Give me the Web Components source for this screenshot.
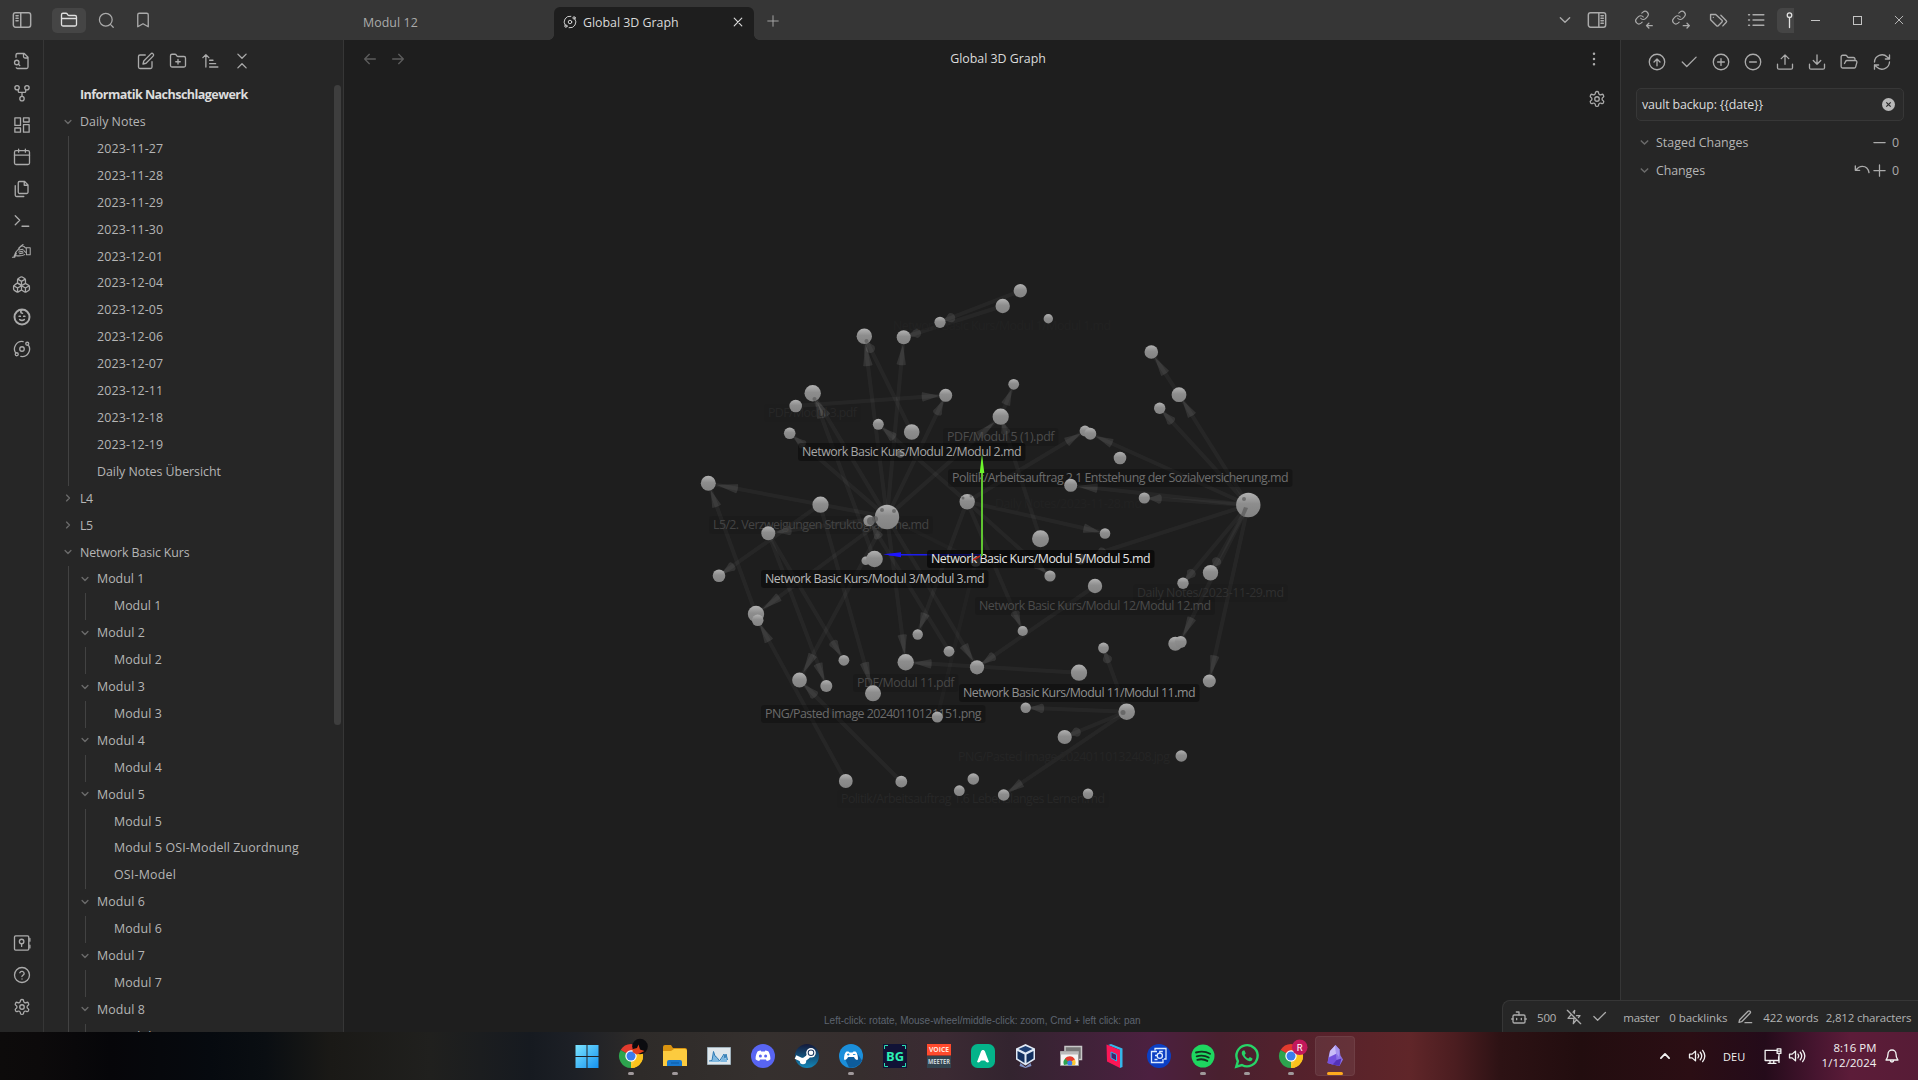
<!DOCTYPE html>
<html lang="de">
<head>
<meta charset="utf-8">
<title>Global 3D Graph</title>
<style>
html,body{margin:0;padding:0;background:#1e1e1e;overflow:hidden}
body{font-family:"Open Sans","Noto Sans",sans-serif;font-size:12.4px;color:#b5b5b5}
</style>
</head>
<body>
<vault-app></vault-app>
<script>
const ICONS = {
  panelL:'<rect x="1.6" y="3.4" width="20.8" height="17.2" rx="2.6"/><path d="M10.5 3.4v17.2M4.8 7h2.6M4.8 10h2.6M4.8 13h2.6"/>',
  panelR:'<rect x="1.6" y="3.4" width="20.8" height="17.2" rx="2.6"/><path d="M14.2 3.4v17.2M16.8 7h2.8M16.8 10h2.8M16.8 13h2.8M16.8 16h2.8"/>',
  folder:'<path d="M20 20a2 2 0 0 0 2-2V8a2 2 0 0 0-2-2h-7.9a2 2 0 0 1-1.7-.9L9.6 3.9A2 2 0 0 0 7.9 3H4a2 2 0 0 0-2 2v13a2 2 0 0 0 2 2ZM2 10h20"/>',
  search:'<circle cx="11" cy="11" r="9"/><path d="m21.5 21.5-4-4"/>',
  bookmark:'<path d="m19 21-7-4-7 4V5a2 2 0 0 1 2-2h10a2 2 0 0 1 2 2v16z"/>',
  fileSearch:'<path d="M14 2v4a2 2 0 0 0 2 2h4M4.3 21a2 2 0 0 0 1.7 1h12a2 2 0 0 0 2-2V7l-5-5H6a2 2 0 0 0-2 2v3"/><circle cx="5" cy="14" r="3"/><path d="m9 18-1.8-1.8"/>',
  fork:'<circle cx="12" cy="19.5" r="2.9"/><circle cx="5.4" cy="5" r="2.9"/><circle cx="18.6" cy="5" r="2.9"/><path d="M17 8v1.5c0 1-.6 1.7-1.5 1.7h-7C7.600 11.200 7 10.500 7 9.500V8M12 11.500v5"/>',
  dash:'<rect x="2.500" y="2.500" width="7.500" height="10"/><rect x="14" y="2.500" width="7.500" height="5.500"/><rect x="14" y="11.500" width="7.500" height="10"/><rect x="2.500" y="16" width="7.500" height="5.500"/>',
  calendar:'<rect x="2" y="3.500" width="20" height="18.500" rx="2"/><path d="M16.500 1.500v4M7.500 1.500v4M2 9.500h20"/>',
  files:'<path d="M15.500 2H8.600A1.700 1.700 0 0 0 7 3.600v12.800A1.700 1.700 0 0 0 8.600 18h9.800a1.700 1.700 0 0 0 1.600-1.600V6.500L15.500 2zM15 2v5h5M3 7.600v12.800A1.700 1.700 0 0 0 4.600 22h9.800"/>',
  terminal:'<path d="m3 17 6-6-6-6M12 19h9"/>',
  hand:'<g stroke-width="1.300"><path d="M.5 20.500h3M2.500 20c1-4 3.500-8 6-10C10 7.500 12 5.500 14 4.500M5 18.500c3.500.5 8 .3 11-1.300M8.500 9c2-2.500 4-3 6-2.300 1.700.7 2.500 2.300 3.500 2.600M9 11.500l5-1.200M8.500 14l5-1M9.500 16l4.500-1M15 12c1 1.500 1.500 2.200 3 2.700M18 8.500l.3 9M18.300 8.500h4.700v9h-4.700M3.500 20.500l2-5"/></g>',
  boxes:'<g stroke-width="1.650"><path d="M3 12.900A2 2 0 0 0 2 14.600v3.200a2 2 0 0 0 1 1.700l3 1.800a2 2 0 0 0 2 0l4-2.400V13l-4-2.400a2 2 0 0 0-2 0ZM7 16.500l-4.700-2.900M7 16.500l5-3M7 16.500v5.100M12 13.500V19l4 2.400a2 2 0 0 0 2 0l3-1.800a2 2 0 0 0 1-1.700v-3.200a2 2 0 0 0-1-1.700l-3-1.800a2 2 0 0 0-2 0ZM17 16.500l-5-3M17 16.500l4.700-2.900M17 16.500v5.100M8 4.400A2 2 0 0 0 7 6.100v4.400l5 3 5-3V6.100a2 2 0 0 0-1-1.700l-3-1.800a2 2 0 0 0-2 0ZM12 8 7.300 5.200M12 8l4.700-2.800M12 8v5.500"/></g>',
  baby:'<circle cx="12" cy="12" r="10" stroke-width="2.600"/><path d="M12 2.500c-2.500 1-2 4.500.5 4.500M8.300 11h1.400M14.300 11h1.400M9 15.500c1.800 1.300 4.200 1.300 6 0" stroke-width="2.300"/>',
  orbit:'<circle cx="12" cy="12" r="3"/><circle cx="19" cy="5" r="2"/><circle cx="5" cy="19" r="2"/><path d="M10.400 21.900a10 10 0 0 0 9.900-15.500M13.500 2.100a10 10 0 0 0-9.800 15.500"/>',
  vault:'<rect x="2" y="2.500" width="19" height="19" rx="1.500"/><circle cx="11.500" cy="10" r="3"/><path d="M11.500 13v3.500M22.500 6v3.500M22.500 15v3.500"/>',
  help:'<circle cx="12" cy="12" r="10"/><path d="M9.100 9a3 3 0 0 1 5.800 1c0 2-3 2.500-3 4M12 17.300h.01"/>',
  gear:'<path d="M12.200 2h-.4a2 2 0 0 0-2 2v.2a2 2 0 0 1-1 1.700l-.4.300a2 2 0 0 1-2 0l-.200-.1a2 2 0 0 0-2.700.7l-.200.4a2 2 0 0 0 .7 2.700l.2.100a2 2 0 0 1 1 1.700v.500a2 2 0 0 1-1 1.700l-.2.100a2 2 0 0 0-.7 2.700l.2.400a2 2 0 0 0 2.700.7l.2-.1a2 2 0 0 1 2 0l.4.300a2 2 0 0 1 1 1.700v.2a2 2 0 0 0 2 2h.4a2 2 0 0 0 2-2v-.2a2 2 0 0 1 1-1.700l.4-.3a2 2 0 0 1 2 0l.2.100a2 2 0 0 0 2.700-.7l.2-.4a2 2 0 0 0-.7-2.700l-.2-.1a2 2 0 0 1-1-1.700v-.5a2 2 0 0 1 1-1.700l.2-.1a2 2 0 0 0 .7-2.700l-.2-.4a2 2 0 0 0-2.700-.7l-.2.100a2 2 0 0 1-2 0l-.4-.3a2 2 0 0 1-1-1.700V4a2 2 0 0 0-2-2z"/><circle cx="12" cy="12" r="3"/>',
  edit:'<path d="M11 4H4a2 2 0 0 0-2 2v14a2 2 0 0 0 2 2h14a2 2 0 0 0 2-2v-7"/><path d="M18.500 2.500a2.100 2.100 0 0 1 3 3L12 15l-4 1 1-4Z"/>',
  folderPlus:'<path d="M4 20h16a2 2 0 0 0 2-2V8a2 2 0 0 0-2-2h-7.900a2 2 0 0 1-1.700-.9L9.600 3.900A2 2 0 0 0 7.900 3H4a2 2 0 0 0-2 2v13a2 2 0 0 0 2 2ZM12 10v6M9 13h6"/>',
  sort:'<path d="M6.500 20V3.500M2.500 7.500l4-4 4 4M11.500 11h4.500M11.500 15.500h8M11.500 20h11"/>',
  collapse:'<path d="m6.500 2.800 5.500 5.500 5.500-5.500M6.500 21.200l5.500-5.500 5.500 5.500"/>',
  chevD:'<path d="m5 8.500 7 7 7-7"/>', chevR:'<path d="m8.500 5 7 7-7 7"/>', chevU:'<path d="m5 15.500 7-7 7 7"/>',
  x:'<path d="M18.500 5.500l-13 13M5.500 5.500l13 13"/>',
  plus:'<path d="M12 3v18M3 12h18"/>', minus:'<path d="M3 12h18"/>',
  arrowL:'<path d="m11 19-7-7 7-7M20 12H4"/>', arrowR:'<path d="M4 12h16M13 5l7 7-7 7"/>',
  dots:'<g fill="currentColor"><circle cx="12" cy="5" r=".8"/><circle cx="12" cy="12" r=".8"/><circle cx="12" cy="19" r=".8"/></g>',
  linkIn:'<g transform="translate(-1 -1.500) scale(.86)"><path d="M10 13a5 5 0 0 0 7.500.5l3-3a5 5 0 0 0-7-7.100l-1.800 1.700"/><path d="M14 11a5 5 0 0 0-7.500-.5l-3 3a5 5 0 0 0 7 7.100l1.800-1.700"/></g><path d="M23 19.500h-7.500M18.500 16.300 15.300 19.500l3.200 3.200"/>',
  linkOut:'<g transform="translate(-1 -1.500) scale(.86)"><path d="M10 13a5 5 0 0 0 7.500.5l3-3a5 5 0 0 0-7-7.100l-1.800 1.700"/><path d="M14 11a5 5 0 0 0-7.500-.5l-3 3a5 5 0 0 0 7 7.100l1.800-1.700"/></g><path d="M15 19.500h8M20 16.300l3.200 3.200-3.200 3.200"/>',
  tags:'<path d="M8.500 4.500H2v6.500l7.600 7.600a1.500 1.500 0 0 0 2.100 0l4.700-4.700a1.500 1.500 0 0 0 0-2.100zM5.500 8h.01M15 5.500l6.800 6.700a1.500 1.500 0 0 1 0 2.100L17.500 18.800"/>',
  list:'<path d="M8 5h14.500M8 12h14.500M8 19h14.500M2 5h1.500M2 12h1.500M2 19h1.500"/>',
  pull:'<circle cx="18" cy="18" r="3"/><circle cx="6" cy="5.500" r="3"/><path d="M13 6h3a2 2 0 0 1 2 2v7M6 8.500V22"/>',
  upCircle:'<circle cx="12" cy="12" r="10.300"/><path d="m8 12 4-4 4 4M12 17V8"/>',
  check:'<path d="M21.500 5.500 9 18l-6-6"/>',
  plusCircle:'<circle cx="12" cy="12" r="10.300"/><path d="M12 7.500v9M7.500 12h9"/>',
  minusCircle:'<circle cx="12" cy="12" r="10.300"/><path d="M7.500 12h9"/>',
  upload:'<path d="M22 15v4.500a2 2 0 0 1-2 2H4a2 2 0 0 1-2-2V15M17 7.500l-5-5-5 5M12 2.500V15"/>',
  download:'<path d="M22 15v4.500a2 2 0 0 1-2 2H4a2 2 0 0 1-2-2V15M7 10l5 5 5-5M12 15V2.500"/>',
  folderOpen:'<path d="m6 14 1.500-2.900A2 2 0 0 1 9.200 10H20.500a2 2 0 0 1 2 2.500l-1.600 6a2 2 0 0 1-1.900 1.500H3.500a2 2 0 0 1-2-2V5a2 2 0 0 1 2-2h3.900a2 2 0 0 1 1.700.9l.8 1.200a2 2 0 0 0 1.700.9H18a2 2 0 0 1 2 2v2"/>',
  refresh:'<path d="M2 12a10 10 0 0 1 17-6.700L22 8M22 2.500V8h-5.500M22 12a10 10 0 0 1-17 6.700L2 16M7.500 16H2v5.500"/>',
  undo:'<path d="M2 6v6.500h6.500M3 12c2.500-3.500 5.500-5.500 9.500-5.500 5 0 9 3.500 10 9.500"/>',
  bot:'<rect x="3" y="9" width="18" height="12" rx="2"/><path d="M8.500 14v2M15.500 14v2M12 9V4.500H8M1 15h2M21 15h2"/>',
  zapOff:'<path d="M12.400 6.800 13 2l-2.300 2.800M18.600 12.900 21 10h-5.300M8 8l-5 6h9l-1 8 5-6M2 2l20 20"/>',
  pencil:'<path d="M12 20.500h10M16.500 3.500a2.100 2.100 0 0 1 3 3L7 19l-4 1 1-4Z"/>',
  speaker:'<path d="M2 9.500v5h3.500L10 18.500v-13L5.500 9.500zM13.300 9.500c1.200 1.500 1.200 3.500 0 5M16.300 7c2.400 3 2.400 7 0 10M19.500 4.500c3.500 4.500 3.500 10.500 0 15"/>',
  net:'<path d="M16 4.500H1.500V18h18v-5M8 18v3.500M13 18v3.500M5.500 21.800H16M17.500 2.500h5v6h-5zM20 8.500V20.500M18.500 5.500h3"/>',
  bell:'<path d="M6 9a6 6 0 0 1 12 0c0 5 1.500 6.500 3 9H3c1.500-2.500 3-4 3-9M9.500 18.500a2.500 2.500 0 0 0 5 0"/>'
};
const def=(name,css,html,after)=>customElements.define(name,class extends HTMLElement{
  connectedCallback(){
    if(this.shadowRoot)return;
    const root=this.attachShadow({mode:'open'});
    root.innerHTML='<style>*{box-sizing:border-box}'+css+'</style>'+(typeof html==='function'?html(this):html);
    if(after)after(this,root);
  }
});
const ic=(n,s=18,extra='')=>`<ui-icon name="${n}" size="${s}" ${extra}></ui-icon>`;
const tx=(t,w,extra='')=>`<fit-text w="${w}" ${extra}>${t}</fit-text>`;

def('vault-app',`:host{display:flex;flex-direction:column;width:1918px;height:1080px;position:relative}
 .mid{display:flex;height:992px;position:relative}
 status-bar{position:absolute;right:0;bottom:0}`,
 `<title-bar></title-bar><div class="mid"><ribbon-bar></ribbon-bar><file-pane></file-pane><graph-view></graph-view><git-pane></git-pane><status-bar></status-bar></div><task-bar></task-bar>`);

def('title-bar',`:host{display:flex;height:40px;background:#363636;color:#ababab;align-items:center}
 .c{display:flex;align-items:center;justify-content:center}
 .toggle{width:44px}
 .btns{display:flex;gap:3px;margin-left:8px;width:292px}
 .b{width:34px;height:25px;border-radius:5px}
 .on{background:#454545;color:#e0e0e0}
 .tabs{display:flex;align-self:stretch;align-items:flex-end;padding-left:10px;width:1177px}
 .tab{width:200px;height:33px;display:flex;align-items:center;padding:0 9px 3px;gap:6px}
 .act{background:#1e1e1e;color:#dadada;border-radius:6px 6px 0 0;position:relative}
 .act:before,.act:after{content:"";position:absolute;bottom:0;width:5px;height:5px}
 .act:before{left:-5px;background:radial-gradient(circle at 0 0,transparent 4.5px,#1e1e1e 5px)}
 .act:after{right:-5px;background:radial-gradient(circle at 100% 0,transparent 4.5px,#1e1e1e 5px)}
 .act ui-icon:last-child{margin-left:auto}
 .add{width:38px;height:38px}
 .r{display:flex;align-items:center;width:100px;gap:14px;padding-left:0}
 .right{display:flex;width:173px;gap:3.400px;padding-left:6px;overflow:hidden}
 .right .b{flex:none}
 .win{display:flex;width:124px;color:#c0c0c0}
 .win .c{width:42px;flex:none}
 .sq{width:9px;height:9px;border:1px solid #c4c4c4}`,
 `<div class="c toggle">${ic('panelL',20)}</div>
 <div class="btns"><div class="c b on">${ic('folder')}</div><div class="c b">${ic('search',17)}</div><div class="c b">${ic('bookmark')}</div></div>
 <div class="tabs"><div class="tab">${tx('Modul 12',54.8)}</div>
 <div class="tab act">${ic('orbit',14,'thin')}${tx('Global 3D Graph',95.6)}${ic('x',14)}</div>
 <div class="c add">${ic('plus',14,'thin')}</div></div>
 <div class="r">${ic('chevD',16,'style="margin-left:36px"')}${ic('panelR',20)}</div>
 <div class="right"><div class="c b">${ic('linkIn')}</div><div class="c b">${ic('linkOut')}</div><div class="c b">${ic('tags',19)}</div><div class="c b">${ic('list')}</div><div class="c b on">${ic('pull')}</div></div>
 <div class="win"><div class="c"><svg width="9" height="9"><path d="M0 4.500h9" stroke="#c4c4c4"/></svg></div><div class="c"><div class="sq"></div></div><div class="c">${ic('x',14,'thin')}</div></div>`);

def('ribbon-bar',`:host{display:flex;flex-direction:column;width:44px;flex:none;background:#262626;border-right:1px solid #363636;align-items:center;color:#ababab;padding:12px 0 16px;gap:14px}
 .sp{flex:1}`,
 ['fileSearch','fork','dash','calendar','files','terminal'].map(n=>ic(n)).join('')+ic('hand',19,'style="margin-top:-3px"')+ic('boxes',19,'style="margin-top:1px"')+['baby','orbit'].map(n=>ic(n)).join('')+'<div class="sp"></div>'+['vault','help','gear'].map(n=>ic(n)).join(''));

const d=(t,w=66.3)=>`<tree-item label="${t}" w="${w}"></tree-item>`;
const m=(n,kids)=>`<tree-item label="Modul ${n}" w="${n==1?47.300:48}" open>${kids||d('Modul '+n,n==1?47.300:48)}</tree-item>`;
def('file-pane',`:host{display:flex;flex-direction:column;width:300px;flex:none;background:#262626;border-right:1px solid #363636;overflow:hidden;position:relative}
 .tools{display:flex;gap:14px;padding:12px 0 0 93px;color:#ababab;height:41px;flex:none}
 h1{font-size:12.600px;font-weight:700;color:#dcdcdc;margin:0;height:27.050px;line-height:28px;padding-left:36px;flex:none}
 .tree{flex:1;min-height:0;overflow:hidden;padding-left:36px}
 .bar{position:absolute;left:290px;top:45px;width:7px;height:640px;border-radius:4px;background:#3e3e3e}`,
 `<div class="tools">${ic('edit')}${ic('folderPlus')}${ic('sort')}${ic('collapse')}</div>
 <h1>${tx('Informatik Nachschlagewerk',167.7)}</h1>
 <div class="tree"><tree-item label="Daily Notes" w="65.7" open>${['11-27','11-28','11-29','11-30','12-01','12-04','12-05','12-06','12-07','12-11','12-18','12-19'].map(x=>d('2023-'+x)).join('')}${d('Daily Notes Übersicht',124)}</tree-item>
 <tree-item label="L4" w="12.700" closed></tree-item><tree-item label="L5" w="12.700" closed></tree-item>
 <tree-item label="Network Basic Kurs" w="109.500" open>${m(1)+m(2)+m(3)+m(4)+m(5,d('Modul 5',48)+d('Modul 5 OSI-Modell Zuordnung',184.800)+d('OSI-Model',62))+m(6)+m(7)+m(8)}</tree-item></div>
 <div class="bar"></div>`);
def('tree-item',`:host{display:block}
 .row{height:26.920px;display:flex;align-items:center}
 .row ui-icon{margin-left:-17px;margin-right:7px;color:#6a6a6a;width:10px}
 .kids{margin:1px 0 -1px -12px;border-left:1px solid #424242;padding-left:28px}
 .kids ::slotted(*){position:relative;top:-1px}`,
 el=>`<div class="row">${el.hasAttribute('open')?ic('chevD',10,'bold'):el.hasAttribute('closed')?ic('chevR',10,'bold'):''}${tx(el.getAttribute('label'),el.getAttribute('w'))}</div>${el.hasAttribute('open')?'<div class="kids"><slot></slot></div>':''}`);

/* nodes: x, y, radius */
const NODES=[[1002.7,306,7.2],[940,322.3,5.6],[903.7,337.3,7],[864.3,336.3,7.7],[812.7,393.3,8.2],[795.7,406,6.3],[789.7,433.3,5.8],[945.7,395.3,6.5],[878.3,424.3,5.5],[911.7,432,7.8],[1000.7,416.7,8.1],[900.3,454,3.7],[708.3,483.3,7.5],[820.5,504.7,8.1],[869,520.7,5.6],[887,517,12.2],[967.2,501.7,7.7],[768.3,533.3,7],[1020.3,290.7,6.7],[1048.3,318.7,4.7],[1151.3,352,6.8],[1179,394.7,7.4],[1159.7,408.3,5.7],[1013.7,384.3,5.4],[1085,431,5.4],[1090.3,433.7,6],[1120,458,6.300],[1070.7,485.300,6.5],[1144.3,498,5.6],[1248.3,505,12.2],[1105,533.5,5.3],[719,575.7,6.3],[865.7,560.7,4.2],[874.5,559,8.3],[756,614,8.2],[757.7,620.3,5.8],[917.7,634.5,5.2],[843.9,660.3,5.400],[949,651.3,5.400],[905.7,662.3,8.2],[977,667.3,7.1],[799.500,680,7.4],[826.3,686,6],[873,693.3,8],[937.3,717,5.5],[845.8,781,6.9],[901.3,781.7,5.9],[973.3,779,5.8],[959.3,790.7,5.4],[1003.7,795,5.800],[1040.5,538.7,8.5],[1050,576,5.6],[1095,586,7.2],[1210.5,572.7,7.700],[1183,583.3,5.7],[1022.7,631,5.1],[1175.3,643.7,7],[1180.7,642,6],[1103.500,648,5.400],[1209.3,681,6.5],[1079,672.7,8.1],[1126.7,711.7,8.3],[1025.7,707.700,5.2],[1064.7,737,7.1],[1181.3,756,5.8],[1088,793.7,5.2]];
/* links: x1,y1 -> x2,y2, target radius, visible cone length */
const A=[887,517],B=[1248.3,505],C=[967,501.7],D=[768.3,533.3],E=[1126.7,711.7];
const LINKS=[[1020,291,940,322,3,9],[1002.7,306,903.7,337.3,4,10],[...A,864.3,336.3,7,22],[...A,903.7,337.3,7,20],[...A,812.7,393.3,8,18],[...A,789.7,433.3,5,12],[...A,945.7,395.3,5,14],[...A,1000.7,416.7,8,20],[...A,977,667.3,7,18],[...A,905.7,662.3,8,19],[...A,708.3,483.3,8,21],[...A,756,614,8,20],[...A,799.3,680,8,20],[...A,975.7,561,5,0],[...A,768.3,533.3,7,14],
[911.7,432,864.3,336.3,4,10],[795.7,406,945.7,395.3,6,17],[...C,878.3,424.3,5,14],[...C,1085,431,5,16],[...C,1105,533,5,16],[...C,1022.7,631,5,14],[...C,1050,576,5,12],[...C,917.7,634,5,16],[820,504.7,719,575.7,3,13],[820,504.7,873,693.3,8,23],[874.3,559,812.7,393.3,7,18],[756,614,708.3,483.3,7,17],[...D,843.7,660.3,5,15],[...D,826.3,686,5,18],[949,651,869,520.7,5,13],[1095,586,977,667.3,5,14],[1079,672.7,905.7,662.3,7,18],[845.7,781,757.7,620.3,4,19],[901.3,781.7,799.3,680,6,15],[975.7,561,937.3,717,5,0],[1000.7,416.7,1013.7,384.3,5,16],[1040.3,538.7,1000.7,416.7,4,12],
[...B,1179,394.7,6,18],[1179,394.7,1151.3,352,6,19],[...B,1159.7,408.3,4,13],[...B,1090.3,433.7,6,17],[...B,1070.700,485.300,6,20],[...B,1144.3,498,3,12],[...B,1080.3,559,15,8],[...B,1183,583.3,3,10],[...B,1210.3,572.7,5,8],[...B,1180,642,6,20],[...B,1209.3,681,6,19],[...E,1103.3,648,4,8],[...E,1025.7,707.7,3,13],[...E,1064.7,737,4,9],[...E,1003.7,795,5,16]];
/* labels: text, x, width, centre y, colour, plate opacity */
const BACK=[['Network Basic Kurs/Modul 1/Modul 1.md',893,218,326,'#222',0],['PDF/Modul 3.pdf',768,89,413,'#272727',.02],['PDF/Modul 5 (1).pdf',947,107.500,437,'#4c4c4c',.12],['Daily Notes/2023-11-28.md',995,147,504,'#222',0],['L5/2. Verzweigungen Struktogramme.md',713,216,525,'#434343',.07],['Politik/Arbeitsauftrag 2.1 Entstehung der Sozialversicherung.md',952,336.500,478,'#6e6e6e',.25],['Daily Notes/2023-11-29.md',1137,147,593,'#303030',.04],['Network Basic Kurs/Modul 12/Modul 12.md',979,232,606,'#4b4b4b',.12],['PDF/Modul 11.pdf',857,97.500,683,'#484848',.12],['PNG/Pasted image 20240110121151.png',765,216.500,714,'#6b6b6b',.25],['PNG/Pasted image 20240110132408.jpg',958,212,757,'#252525',0],['Politik/Arbeitsauftrag 1.6 Lebenslanges Lernen.md',841,264,799,'#272727',.02]];
const FRONT=[['Network Basic Kurs/Modul 2/Modul 2.md',802,219.500,452,'#a6a6a6',.4],['Network Basic Kurs/Modul 11/Modul 11.md',963,232.500,693,'#909090',.35],['Network Basic Kurs/Modul 3/Modul 3.md',765,219.500,579,'#bababa',.42],['Network Basic Kurs/Modul 5/Modul 5.md',931,219.500,559,'#e6e6e6',.6]];
const label=([t,x,w,y,c,o])=>`<rect x="${x-4}" y="${y-9}" width="${w+8}" height="18" rx="3" fill="#000" fill-opacity="${o}"/><text x="${x}" y="${y+4.200}" textLength="${w}" fill="${c}">${t}</text>`;
const link=([x1,y1,x2,y2,r,len])=>{
  const L=Math.hypot(x2-x1,y2-y1),ux=(x2-x1)/L,uy=(y2-y1)/L,tx=x2-ux*r,ty=y2-uy*r;
  const line=`<path d="M${x1} ${y1}L${x2} ${y2}" stroke="#fff" stroke-opacity="${len?.038:.02}" stroke-width="4"/>`;
  if(!len)return line;
  const bx=tx-ux*len,by=ty-uy*len,w=4.600,a=Math.atan2(uy,ux)*57.3,k=len<12?4:len<16?2.500:1;
  return line+`<g fill="#fff" opacity=".095"><path d="M${tx} ${ty}L${bx-uy*w} ${by+ux*w}L${bx+uy*w} ${by-ux*w}Z"/><ellipse cx="${bx}" cy="${by}" rx="${k}" ry="${w}" transform="rotate(${a} ${bx} ${by})"/></g>`;
};
def('graph-view',`:host{display:grid;width:1276px;height:992px;flex:none;background:#1e1e1e}
 :host>*{grid-area:1/1}
 .head{display:flex;align-items:center;justify-content:space-between;height:37px;padding:0 17px 0 18px;color:#dcdcdc}
 .side{width:135px;display:flex;gap:12px;color:#5c5c5c}
 .side.e{width:104px;justify-content:flex-end;color:#ababab}
 .set{justify-self:end;align-self:start;margin:50px 14px 0 0;color:#ababab}
 .hint{align-self:end;justify-self:start;margin:0 0 6px 480px;font:10px "Liberation Sans",Arial,sans-serif;color:#5d6470}
 text{font-size:12.400px}`,
 `<svg width="1276" height="992" viewBox="344 40 1276 992">
 <defs><linearGradient id="ball" x1="0" y1="0" x2="0" y2="1"><stop offset="0" stop-color="#b2b2b2"/><stop offset=".45" stop-color="#8d8d8d"/><stop offset="1" stop-color="#838383"/></linearGradient></defs>
 ${LINKS.map(link).join('')}
 ${BACK.map(label).join('')}
 <circle cx="975.7" cy="561.3" r="5.500" fill="#666"/><circle cx="1080.300" cy="559" r="5.500" fill="#777"/>
 ${NODES.map(([x,y,r])=>`<circle cx="${x}" cy="${y}" r="${r}" fill="url(#ball)"/>`).join('')}
 <g fill="#5a5a5a" fill-opacity=".7"><circle cx="882" cy="510" r="2"/><circle cx="894" cy="511" r="2"/><circle cx="875" cy="519" r="3"/><circle cx="871" cy="521" r="4"/><circle cx="1244" cy="499" r="2"/><path d="m1241 515 3-8 4 1-4 9z"/><circle cx="866.500" cy="341" r="2"/><circle cx="814.500" cy="399" r="2"/><circle cx="1123" cy="712.500" r="2.500"/><circle cx="963" cy="498" r="1.500"/><circle cx="971" cy="496" r="1.500"/></g>
 <path d="M889 554.700H982" stroke="#1c1cf0" stroke-width="1.600"/><path d="M883 554.300l18-2v5z" fill="#1d14ff"/>
 ${FRONT.map(label).join('')}
 <path d="M973 560l7-4" stroke="#c0261c" stroke-width="1.600"/>
 <path d="M982 470V556" stroke="#5fc431" stroke-width="2"/><path d="M982 454l2.300 19h-4.600z" fill="#6cf52c"/>
 </svg>
 <div class="head"><div class="side">${ic('arrowL',16)}${ic('arrowR',16)}</div>${tx('Global 3D Graph',95.600)}<div class="side e">${ic('dots',18)}</div></div>
 ${ic('gear',18,'class="set"')}
 <div class="hint">${tx('Left-click: rotate, Mouse-wheel/middle-click: zoom, Cmd + left click: pan',316.600)}</div>`);

def('git-pane',`:host{display:flex;flex-direction:column;width:298px;flex:none;background:#262626;border-left:1px solid #363636;padding:13px 14px 0 15px}
 .tools{display:flex;gap:14px;padding:0 0 0 12px;color:#ababab;height:35px}
 .tools ui-icon:last-child{margin-left:1px}
 .msg{display:flex;align-items:center;justify-content:space-between;height:33px;border:1px solid #373737;border-radius:5px;background:#2a2a2a;color:#dcdcdc;padding:0 8px 0 5px;margin-bottom:7px}
 .row{display:flex;align-items:center;height:28px;padding:0 5px 0 2.500px}
 .row>ui-icon{color:#6a6a6a}
 .row fit-text.t{margin-left:6.500px;margin-right:auto}
 .acts{display:flex;align-items:center;gap:4.500px;color:#ababab}
 .acts ui-icon+ui-icon{margin-left:-2.500px}`,
 `<div class="tools">${['upCircle','check','plusCircle','minusCircle','upload','download','folderOpen','refresh'].map(n=>ic(n)).join('')}</div>
 <div class="msg">${tx('vault backup: {{date}}',121)}<svg width="13" height="13"><circle cx="6.500" cy="6.500" r="6.500" fill="#b8b8b8"/><path d="M4.300 4.300l4.400 4.400M8.700 4.300l-4.400 4.400" stroke="#2a2a2a" stroke-width="1.200"/></svg></div>
 <div class="row">${ic('chevD',11,'bold')}${tx('Staged Changes',92.400,'class="t"')}<div class="acts">${ic('minus',15)}${tx('0',7)}</div></div>
 <div class="row">${ic('chevD',11,'bold')}${tx('Changes',49,'class="t"')}<div class="acts">${ic('undo',16)}${ic('plus',15)}${tx('0',7)}</div></div>`);

def('status-bar',`:host{display:flex;align-items:center;width:416px;height:32px;background:#262626;border:1px solid #363636;border-width:1px 0 0 1px;border-radius:8px 0 0 0;padding-left:8px;padding-top:1px;font-size:11.500px;color:#b3b3b3}
 ui-icon{color:#ababab;margin-top:-1px}`,
 `${ic('bot',16)}${tx('500',19.300,'style="margin-left:10px"')}${ic('zapOff',16,'style="margin-left:10px"')}${ic('check',15,'style="margin-left:10px"')}${tx('master',36,'style="margin-left:16px"')}${tx('0 backlinks',58,'style="margin-left:10px"')}${ic('pencil',16,'style="margin-left:10px"')}${tx('422 words',55,'style="margin-left:10px"')}${tx('2,812 characters',85.500,'style="margin-left:7.500px"')}`);

const chrome='<path d="M12 12 1.600 6A12 12 0 0 1 22.400 6z" fill="#e33b2e"/><path d="M12 12 22.400 6A12 12 0 0 1 12 24z" fill="#fcc934"/><path d="M12 12v12A12 12 0 0 1 1.600 6z" fill="#2da44e"/><path d="M12 6.500h10.700A12 12 0 0 1 12 24l5-9z" fill="#fcc31c"/><circle cx="12" cy="12" r="5.700" fill="#fff"/><circle cx="12" cy="12" r="4.500" fill="#3b7ded"/>';
const sv=(s)=>`<svg width="24" height="24" viewBox="0 0 24 24" overflow="visible">${s}</svg>`;
const APPS=[
 [`<defs><linearGradient id="w" x1="0" y1="0" x2="1" y2="1"><stop offset="0" stop-color="#7be4ff"/><stop offset="1" stop-color="#1592f0"/></linearGradient></defs><path fill="url(#w)" d="M.5 1h11v11H.500zM12.500 1h11v11h-11zM.500 13h11v11H.500zM12.500 13h11v11h-11z"/>`],
 [chrome+'<circle cx="21" cy="2.500" r="7.800" fill="#0c0c10"/><path d="M13.500 8l.5-3 4-1 1.500-3.500 1.500 5 4.500 1.500-5 2.500-3 1z" fill="#e0401c"/>',1],
 ['<path d="M0 3a2 2 0 0 1 2-2h6l2 3h12a2 2 0 0 1 2 2v4H0z" fill="#d9930f"/><path d="M0 7h8l3-2h11a2 2 0 0 1 2 2v15H0z" fill="#fccb3f"/><path d="M4 22v-4a2 2 0 0 1 2-2h11a2 2 0 0 1 2 2v4z" fill="#1878cf"/><path d="M8 19h8" stroke="#0d5aa5"/>',1],
 ['<path d="M.500 3.500h23v17H.500z" fill="#dfe7ec" stroke="#9fb0ba"/><path d="M2 18l3-1 1.500-9 1.500 4 2 2 3 4 2-4 2-3 1.500 4 1.500-4V18z" fill="#7fb8e0"/><path d="M2 17l3-.500L6.500 7.500 8 12l2 1.500 2.500 3.500 2-3 2.500-4 1 4 1-4 1.500 6" stroke="#2c7ab5" fill="none"/>'],
 ['<circle cx="12" cy="12" r="12" fill="#5865f2"/><path d="M6.500 7.500C8 6.700 9 6.500 9.700 6.500l.5 1h3.600l.5-1c.7 0 1.700.2 3.200 1 1.300 2.300 2 4.800 1.900 7.800-1.300 1-2.400 1.500-3.600 1.700l-.9-1.400H9.100L8.200 17c-1.200-.2-2.300-.7-3.600-1.700-.1-3 .6-5.500 1.900-7.800z" fill="#fff"/><circle cx="9.400" cy="12" r="1.500" fill="#5865f2"/><circle cx="14.600" cy="12" r="1.500" fill="#5865f2"/>'],
 ['<defs><linearGradient id="st" x1="0" y1="0" x2="0" y2="1"><stop offset="0" stop-color="#14193a"/><stop offset="1" stop-color="#1387b8"/></linearGradient></defs><circle cx="12" cy="12" r="12" fill="url(#st)"/><path d="M.500 13 8 16.500l4.500-3.500 3-4" stroke="#fff" stroke-width="4" fill="none"/><circle cx="16" cy="8.800" r="4.800" fill="#fff"/><circle cx="16" cy="8.800" r="3.300" fill="#17345c"/><circle cx="16" cy="8.800" r="2.300" fill="#fff"/><circle cx="8" cy="17" r="3.200" fill="#fff"/>'],
 ['<circle cx="12" cy="12" r="12" fill="#1b8fdb"/><path d="M6 15l4 8.500a12 12 0 0 0 13-7L18 9z" fill="#0d5c9c"/><path d="M7.500 7.500h2l1 1h3l1-1h2c1.800 1 2.500 4.500 2.500 8-1.500 1-3-.2-4-2.500H9c-1 2.300-2.500 3.500-4 2.500 0-3.500.7-7 2.500-8z" fill="#fff"/><path d="M8 10.500h2.400M9.200 9.300v2.400M14 10.500h2.400" stroke="#1b8fdb" stroke-width=".9"/>',1],
 ['<path d="M0 0h24v24H0z" fill="#111236"/><path d="M1.500 5V1.500H5M19 1.500h3.500V5M22.500 19v3.500H19M5 22.500H1.500V19" stroke="#29e0b0" fill="none"/><text x="3" y="16.800" font-family="Open Sans" font-weight="700" font-size="13" textLength="18" lengthAdjust="spacingAndGlyphs" fill="#2df0b4">BG</text>'],
 ['<path d="M0 0h24v11.500H0z" fill="#ff4a2d"/><path d="M0 12h24v12H0z" fill="#33444f"/><text x="2" y="8.200" font-family="Open Sans" font-weight="700" font-size="6.500" textLength="20" lengthAdjust="spacingAndGlyphs" fill="#ffe4dc">VOICE</text><text x="1" y="20.300" font-family="Open Sans" font-weight="700" font-size="6.500" textLength="22" lengthAdjust="spacingAndGlyphs" fill="#c9d3d8">MEETER</text>'],
 ['<rect width="24" height="24" rx="6.500" fill="#04b38a"/><path d="M6 18 10 7.500c.800-2 3.200-2 4 0L18 18c-1.500.800-3 .300-3.700-1.200-1.300-.500-3.300-.500-4.600 0C9 18.300 7.500 18.800 6 18z" fill="#fff"/>'],
 ['<g transform="translate(-1.500 0)"><path d="M7 19l5 4 5-4 1 3-6 2-6-2z" fill="#7f93c7"/><path d="M12 0l9.500 4.500v11L12 21.500l-9.500-6v-11z" fill="#dfe9f5"/><path d="M12 2l7 3-7 3.500L5 5z" fill="#1d3f73"/><path d="M4 7l7 3.500v8.500l-7-4.500zM20 7l-7 3.500v8.500l7-4.500z" fill="#12305f"/></g>'],
 ['<path d="M6 2.500h16.500v13H6z" fill="#777" stroke="#c8c8c8" stroke-width="1.500"/><path d="M1.500 7.500h18v14h-18z" fill="#f4f4f4" stroke="#9b9b9b"/><path d="M1.500 7.500h18v3h-18z" fill="#bbb"/><path d="M5 21a5.700 5.700 0 0 1 2-7l4 6z" fill="#2da44e"/><path d="M6 14.500c3-3.500 8-3 10 1l-5 4z" fill="#e33b2e"/><path d="M16 15.500c.8 2 .8 4 0 5.500h-5v-3z" fill="#fcc934"/><circle cx="10.800" cy="19" r="2.500" fill="#3b7ded"/>'],
 ['<path d="M8 0l11.500 4.500v18.500L17 24V6L5 1z" fill="#35b6ea"/><path d="M3.500 .500 17 6v18L4 17.500z" fill="#fb1757"/><path d="M8 8l5.500 2.500v6.500L8 14z" fill="#45206a" stroke="#22b4ee"/>'],
 ['<circle cx="12" cy="12" r="12" fill="#0b3fc4"/><g fill="none" stroke="#dcebff" stroke-width="1.300"><path d="M8 6.500V4.500h11v10.500h-2"/><path d="M10 7.500H4.500V18.500h11.500v-3.500"/><circle cx="12.800" cy="11.700" r="2.600"/><path d="M7.500 15.500h3M8 11.500h2.500M12.800 9V7.500h3"/></g>'],
 ['<circle cx="12" cy="12" r="11.500" fill="#1ed760"/><path d="M5 8.500c5-1.500 10-1 14 1.300M5.700 12.300c4.300-1.200 8.500-.7 12 1.200M6.300 15.800c3.600-1 7-.6 10 1.100" stroke="#14301e" stroke-width="1.900" fill="none" stroke-linecap="round"/>',1],
 ['<path d="M1.300 22.700l1.600-5.600a10.600 10.600 0 1 1 4 3.900z" fill="none" stroke="#27d468" stroke-width="2.400"/><path d="M8 6.500c-1.500 1-1.700 3-.3 5.300 1.700 2.700 4 4.800 6.900 5.400 1.700.2 3-1 2.900-2.700l-2.600-1.400-1.500 1.500c-1.700-.7-3-2-3.800-3.700l1.200-1.400L9.600 6.500z" fill="#27d468"/>',1],
 [chrome+'<circle cx="20.700" cy="3.200" r="7.800" fill="#c2185b"/><text x="20.700" y="6.700" text-anchor="middle" font-family="Roboto" font-size="9.500" fill="#fff">R</text>',1],
 ['<path d="M12.500 1l4 4.500 1 6 2.500 4-3.500 6.500-7-1.500L4.500 19l1-6 1.500-6z" fill="#8d74e8"/><path d="M12.500 1l.5 9-7 3 1-6z" fill="#c9bdf8"/><path d="M13 10l-7.500 4-1 5 5 1.500 4-4.500z" fill="#7450dd"/><path d="M12.500 1l4 4.500L16 13l-3-4z" fill="#a794f0"/><path d="M13.500 16l5-1.500L16.500 22l-7-1.500z" fill="#5331b8"/>',2]];
def('task-bar',`:host{display:flex;height:48px;flex:none;align-items:stretch;position:relative;color:#f2f2f2;
 background:linear-gradient(90deg,#0d0b0b 0,#0c0a0b 40px,#060609 110px,#060a0f 210px,#0a0e12 265px,#1a1916 330px,#20201e 430px,#161a20 530px,#1d2026 575px,#2e2b29 640px,#35302e 760px,#362e2e 860px,#3b2a33 945px,#33242f 1010px,#3f2238 1080px,#4c2040 1150px,#49202f 1220px,#58222b 1330px,#602629 1410px,#4b1d20 1455px,#2d1214 1500px,#220d0f 1580px,#2b0e14 1690px,#240b1a 1765px,#46152f 1815px,#5c1c39 1850px,#571c36 1918px)}
 .apps{display:flex;gap:4px;margin-left:566.500px}
 .a{width:40px;height:40px;margin-top:4px;display:flex;align-items:center;justify-content:center;position:relative;border-radius:4px}
 .a.s2{background:rgba(255,255,255,.07);box-shadow:inset 0 0 0 1px rgba(255,255,255,.06)}
 .a.s1:after,.a.s2:after{content:"";position:absolute;bottom:1px;left:17px;width:6px;height:3px;border-radius:2px;background:#a0999b}
 .a.s2:after{left:12px;width:16px;background:#ffaa1e}
 .tray{display:flex;align-items:center;margin-left:auto;padding-right:18px}
 .clock{display:flex;flex-direction:column;align-items:flex-end;gap:0;line-height:15.500px;font-size:11.400px;padding-bottom:2px}`,
 `<div class="apps">${APPS.map(([s,k])=>`<div class="a s${k||0}">${sv(s)}</div>`).join('')}</div>
 <div class="tray">${ic('chevU',14,'bold')}${ic('speaker',18,'style="margin-left:16px"')}${tx('DEU',22.500,'style="font-size:11px;margin-left:17px"')}${ic('net',18,'style="margin-left:18px"')}${ic('speaker',18,'style="margin-left:6px"')}
 <div class="clock" style="margin-left:16px">${tx('8:16 PM',43)}${tx('1/12/2024',55)}</div>${ic('bell',16,'style="margin-left:7.500px"')}</div>`);

def('ui-icon',`:host{display:inline-flex;flex:none}svg{display:block;fill:none;stroke:currentColor;stroke-linecap:round;stroke-linejoin:round;overflow:visible}`,
 el=>{const s=el.getAttribute('size');const sw=el.hasAttribute('bold')?3.200:el.hasAttribute('thin')?1.600:s<17?2:1.750;
 return `<svg width="${s}" height="${s}" viewBox="0 0 24 24" stroke-width="${sw}">${ICONS[el.getAttribute('name')]}</svg>`});
/* text run whose tracking is set so that it fills the width w */
def('fit-text',`:host{display:inline-block;white-space:nowrap;flex:none}`,'<slot></slot>',el=>{
  const w=+el.getAttribute('w'),n=el.textContent.length,now=el.getBoundingClientRect().width;
  if(w&&n>1&&now)el.style.letterSpacing=((w-now)/n).toFixed(3)+'px';
});
</script>
</body>
</html>
